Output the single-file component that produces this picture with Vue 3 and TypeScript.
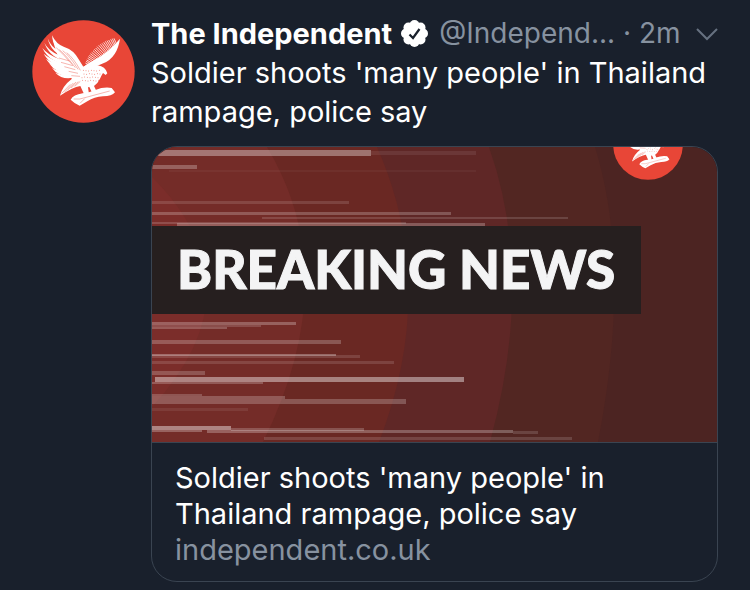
<script setup lang="ts">
interface Streak {
  x: number
  y: number
  w: number
  h: number
  o: number
}

const toStreak = ([x, y, w, h, o]: number[]): Streak => ({ x, y, w, h, o })

const streaks: Streak[] = [
  [0, 3, 219, 6, 0.35],
  [219, 4, 105, 4, 0.08],
  [0, 18, 45, 4, 0.25],
  [17, 23, 307, 2, 0.04],
  [0, 54, 197, 3, 0.13],
  [0, 65, 299, 3, 0.22],
  [110, 70, 306, 2, 0.14],
  [0, 75, 254, 2, 0.16],
  [25, 76, 308, 3, 0.24],
  [0, 175, 144, 3, 0.25],
  [0, 178, 109, 2, 0.16],
  [0, 180, 75, 2, 0.22],
  [0, 193, 189, 4, 0.22],
  [0, 207, 184, 2, 0.3],
  [0, 208, 208, 3, 0.13],
  [0, 214, 242, 3, 0.13],
  [0, 224, 53, 4, 0.2],
  [3, 230, 309, 5, 0.42],
  [0, 235, 111, 2, 0.22],
  [0, 247, 50, 2, 0.2],
  [0, 249, 133, 3, 0.22],
  [0, 252, 254, 5, 0.22],
  [0, 261, 96, 3, 0.08],
  [0, 279, 79, 4, 0.42],
  [0, 283, 50, 2, 0.26],
  [79, 281, 133, 3, 0.2],
  [55, 283, 306, 3, 0.26],
  [361, 284, 25, 3, 0.14],
  [112, 290, 308, 3, 0.14],
].map(toStreak)

const bands = [
  { fill: '#522622', d: 'M0 0H443Q480 120 446 295H0Z' },
  { fill: '#5f2726', d: 'M0 0H337Q383 130 338 295H0Z' },
  { fill: '#6a2823', d: 'M0 0H225Q287 140 227 295H0Z' },
  { fill: '#742c28', d: 'M0 0H115Q193 130 111 295H0Z' },
  { fill: '#7b2d2a', d: 'M0 30Q110 140 0 260Z' },
]

// Long feathers of the left wing, from tip to root
const leftFeathers = [
  'M96 76Q101 101 124 118L132 128Q98 114 96 76Z',
  'M83 85Q91 109 118 125L140 143Q93 130 83 85Z',
  'M73 98Q84 121 116 135L148 156Q90 146 73 98Z',
  'M67 114Q84 135 118 147L154 167Q89 160 67 114Z',
  'M71 131Q91 148 124 158L158 176Q95 174 71 131Z',
  'M78 146Q98 161 130 168L163 183Q103 187 78 146Z',
  'M87 160Q108 174 138 177L167 189Q113 198 87 160Z',
  'M96 174Q118 186 144 186L171 194Q121 208 96 174Z',
  'M106 188Q126 196 148 193L174 199Q131 215 106 188Z',
]

// Fine barbs of the right wing
const rightFeathers = Array.from({ length: 22 }, (_, i) => {
  const t = i / 21
  const rootX = 290 - 78 * t
  const rootY = 103 + 64 * t
  const length = 16 + 28 * Math.sin(Math.PI * Math.min(1, t * 0.8 + 0.12))
  const tipX = rootX - length * (0.3 + t * 0.4)
  const tipY = rootY - length * (0.7 - t * 0.35)
  return `M${rootX.toFixed(0)} ${rootY.toFixed(0)}L${tipX.toFixed(0)} ${tipY.toFixed(0)}`
}).join('')

const speckles = Array.from({ length: 28 }, (_, i) => ({
  x: 190 + (i % 7) * 8 + (Math.floor(i / 7) % 2) * 4 - Math.floor(i / 7) * 2,
  y: 181 + Math.floor(i / 7) * 10 + (i % 3),
}))
</script>

<template>
  <article class="tweet">
    <svg class="avatar" viewBox="36 30 309 309" role="img" aria-label="The Independent">
      <defs>
        <symbol id="eagle" viewBox="36 30 309 309">
          <circle cx="190.500" cy="184.500" r="153.500" fill="#e84637" />
          <g fill="#fff">
            <path v-for="d in leftFeathers" :key="d" :d="d" />
            <path d="M96 76Q109 103 131 110Q162 120 176 148L196 180L184 211L156 207Q138 180 121 153Q105 125 96 76Z" />
            <path d="M300 86Q292 142 250 160Q230 166 216 180L186 178Q194 165 216 154Q268 126 300 86Z" />
            <path d="M184 173Q202 160 233 166Q256 169 262 190L257 195L249 189Q244 197 240 206Q232 222 222 228L231 247L217 250L208 231L204 232L207 253L192 252L181 228Q158 232 120 257Q127 228 156 206Q172 194 184 173Z" />
            <path d="M152 269Q160 254 188 250L207 247L226 240Q251 230 275 234L285 247Q276 259 249 259Q223 261 202 274L179 287Q164 281 152 269Z" />
          </g>
          <path :d="rightFeathers" fill="none" stroke="#fff" stroke-width="2.300" />
          <g fill="none" stroke="#e84637" stroke-width="1.200">
            <path d="M108 112Q132 135 157 164M118 119Q139 137 166 173M128 122Q151 139 174 178M140 128Q160 143 181 181M117 144L148 153M123 157L159 167M133 170L166 179M146 184L174 190M154 197L180 199" />
            <path d="M125 250L151 223M133 247L160 219M143 240L168 216M153 234L175 215M164 229L181 214" />
            <path d="M161 267Q177 270 202 261L269 243M180 280L194 266" />
          </g>
          <g fill="#e84637">
            <circle v-for="(dot, i) in speckles" :key="i" :cx="dot.x" :cy="dot.y" r="1.400" />
          </g>
        </symbol>
      </defs>
      <use href="#eagle" x="36" y="30" width="309" height="309" />
    </svg>

    <div class="content">
      <header class="head">
        <strong class="name">The Independent</strong>
        <svg class="verified" viewBox="0 0 27 27" role="img" aria-label="Verified account">
          <g fill="#fff">
            <circle cx="13.500" cy="13.500" r="10.500" />
            <circle cx="13.500" cy="5" r="5" />
            <circle cx="19.500" cy="7.500" r="5" />
            <circle cx="22" cy="13.500" r="5" />
            <circle cx="19.500" cy="19.500" r="5" />
            <circle cx="13.500" cy="22" r="5" />
            <circle cx="7.500" cy="19.500" r="5" />
            <circle cx="5" cy="13.500" r="5" />
            <circle cx="7.500" cy="7.500" r="5" />
          </g>
          <path d="M8.500 14.500L12 18L18.500 9" fill="none" stroke="#19202c" stroke-width="2.200" />
        </svg>
        <span class="meta">@Independ... · 2m</span>
        <button class="more" type="button" aria-label="More options">
          <svg viewBox="0 0 22 14">
            <path d="M1 2L11 12L21 2" fill="none" stroke="#667180" stroke-width="2" />
          </svg>
        </button>
      </header>

      <p class="body">Soldier shoots 'many people' in Thailand rampage, police say</p>

      <a class="card" href="https://independent.co.uk">
        <svg class="art" viewBox="0 0 565 295">
          <rect width="565" height="295" fill="#4c2422" />
          <path v-for="band in bands" :key="band.d" :d="band.d" :fill="band.fill" />
          <rect
            v-for="(s, i) in streaks"
            :key="i"
            :x="s.x"
            :y="s.y"
            :width="s.w"
            :height="s.h"
            :fill-opacity="s.o"
            fill="#fff"
          />
          <use href="#eagle" x="461" y="-37" width="70" height="70" />
          <rect y="79" width="489" height="88" fill="#261f1f" />
          <text class="headline" x="25" y="142">BREAKING NEWS</text>
        </svg>
        <div class="caption">
          <div>Soldier shoots 'many people' in Thailand rampage, police say</div>
          <div class="domain">independent.co.uk</div>
        </div>
      </a>
    </div>
  </article>
</template>

<style>
html {
  background: #19202c;
}
</style>

<style scoped>
.tweet {
  display: flex;
  align-items: flex-start;
  gap: 16px;
  padding: 14px 32px 8px;
  color: #fff;
  font-family: Inter, "Liberation Sans", sans-serif;
  font-size: 29px;
  line-height: 39px;
}

.avatar {
  flex: none;
  width: 103px;
  height: 103px;
  margin-top: 6px;
}

.content {
  flex: 1;
  min-width: 0;
}

.head {
  display: flex;
  align-items: center;
  white-space: nowrap;
}

.name {
  font-weight: 700;
}

.verified {
  flex: none;
  width: 27px;
  height: 27px;
  margin: 0 11px 0 9px;
}

.meta {
  color: #8792a0;
  font-size: 28px;
}

.more {
  display: flex;
  margin-left: auto;
  padding: 0;
  border: 0;
  background: none;
}

.more svg {
  width: 22px;
  height: 14px;
}

.body {
  margin: 0 0 15px;
}

.card {
  display: block;
  overflow: hidden;
  border: 1px solid #3a4451;
  border-radius: 26px;
  color: inherit;
  text-decoration: none;
}

.art {
  display: block;
  width: 100%;
}

.headline {
  fill: #f4f4f5;
  stroke: #f4f4f5;
  stroke-width: 1px;
  font-family: Lato, sans-serif;
  font-size: 53px;
  font-weight: 900;
}

.caption {
  padding: 17px 23px 13px;
  border-top: 1px solid #3a4451;
  line-height: 36px;
}

.domain {
  color: #8792a0;
}
</style>
